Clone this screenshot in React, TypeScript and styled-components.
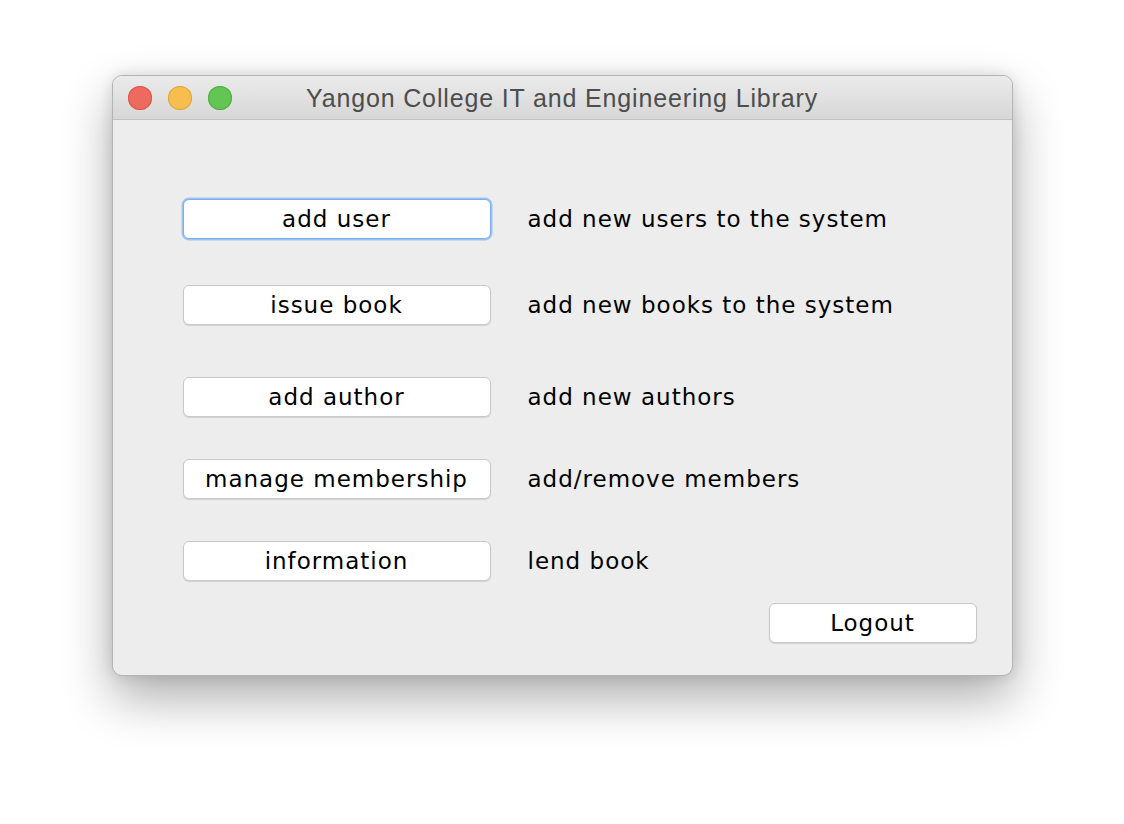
import React from "react";
import styled, { createGlobalStyle } from "styled-components";

const Global = createGlobalStyle`
  html, body { margin: 0; padding: 0; background: #ffffff; }
  body { width: 1124px; height: 824px; overflow: hidden; }
`;

const Page = styled.div`
  width: 1124px;
  height: 824px;
  display: flex;
  justify-content: center;
  align-items: flex-start;
  padding-top: 75px;
  box-sizing: border-box;
`;

const Window = styled.div`
  width: 901px;
  height: 601px;
  border-radius: 10px;
  background: #ededed;
  border: 1px solid #b4b4b4;
  box-sizing: border-box;
  overflow: hidden;
  display: flex;
  flex-direction: column;
  box-shadow: 0 22px 50px rgba(0, 0, 0, 0.32), 0 0 14px rgba(0, 0, 0, 0.12);
`;

const TitleBar = styled.div`
  height: 44px;
  flex: none;
  display: flex;
  align-items: center;
  position: relative;
  background: linear-gradient(#ebebeb, #d7d7d7);
  border-bottom: 1px solid #c2c2c2;
  box-sizing: border-box;
  padding-left: 15px;
  gap: 16px;
`;

const Light = styled.span<{ $c: string; $b: string }>`
  width: 24px;
  height: 24px;
  border-radius: 50%;
  background: ${(p) => p.$c};
  box-shadow: inset 0 0 0 1px ${(p) => p.$b};
  box-sizing: border-box;
`;

const Title = styled.div`
  position: absolute;
  left: 0;
  right: 0;
  top: 0;
  bottom: 0;
  display: flex;
  align-items: center;
  justify-content: center;
  font-family: "Liberation Sans", Arial, sans-serif;
  font-size: 25px;
  letter-spacing: 0.85px;
  color: #4d4d4d;
  pointer-events: none;
  padding-top: 1px;
`;

const Body = styled.div`
  flex: 1;
  display: flex;
  flex-direction: column;
  padding: 0 35px 0 70px;
`;

const Row = styled.div<{ $top: number }>`
  display: flex;
  align-items: center;
  margin-top: ${(p) => p.$top}px;
  gap: 37px;
`;

const Button = styled.div<{ $focus?: boolean; $w?: number }>`
  width: ${(p) => p.$w ?? 308}px;
  height: 40px;
  box-sizing: border-box;
  background: #ffffff;
  border-radius: 6px;
  border: 1px solid ${(p) => (p.$focus ? "#7aaeea" : "#c9c9c9")};
  box-shadow: ${(p) =>
    p.$focus
      ? "0 0 0 1.5px #9cc3f1"
      : "0 1px 1px rgba(0,0,0,0.12)"};
  display: flex;
  align-items: center;
  justify-content: center;
  font-family: "DejaVu Sans", Verdana, sans-serif;
  font-size: 23px;
  letter-spacing: 1px;
  color: #000;
  padding-bottom: 1px;
`;

const Label = styled.div`
  font-family: "DejaVu Sans", Verdana, sans-serif;
  font-size: 23px;
  letter-spacing: 1px;
  color: #000;
`;

const Footer = styled.div`
  display: flex;
  justify-content: flex-end;
  margin-top: 22px;
`;

const rows = [
  { top: 79, btn: "add user", label: "add new users to the system", focus: true },
  { top: 46, btn: "issue book", label: "add new books to the system" },
  { top: 52, btn: "add author", label: "add new authors" },
  { top: 42, btn: "manage membership", label: "add/remove members" },
  { top: 42, btn: "information", label: "lend book" },
];

export default function App() {
  return (
    <>
      <Global />
      <Page>
        <Window>
          <TitleBar>
            <Light $c="#ee6a5f" $b="#d9574c" />
            <Light $c="#f5be4f" $b="#dea43a" />
            <Light $c="#62c554" $b="#50ad42" />
            <Title>Yangon College IT and Engineering Library</Title>
          </TitleBar>
          <Body>
            {rows.map((r) => (
              <Row key={r.btn} $top={r.top}>
                <Button $focus={r.focus}>{r.btn}</Button>
                <Label>{r.label}</Label>
              </Row>
            ))}
            <Footer>
              <Button $w={208}>Logout</Button>
            </Footer>
          </Body>
        </Window>
      </Page>
    </>
  );
}
